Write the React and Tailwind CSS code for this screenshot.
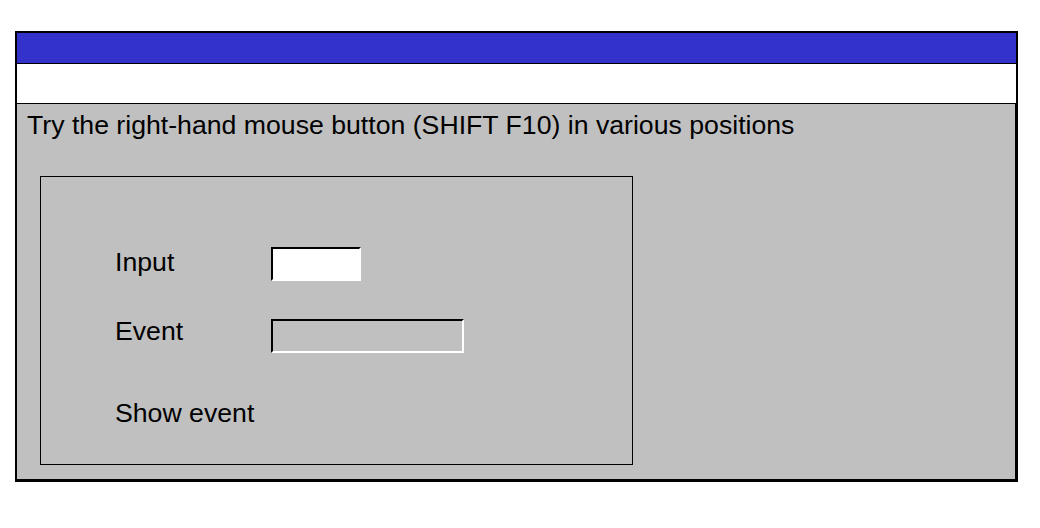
export default function App() {
  return (
    <div className="min-h-screen bg-white pl-[15px] pt-[31px] font-['Liberation_Sans',Arial,sans-serif] text-black">
      <div className="flex w-[1003px] flex-col border-2 border-black">
        <div className="h-[31px] border-b border-black bg-[#3333cc]" />
        <div className="h-[40px] border-b border-black bg-white" />
        <div className="h-[376px] border-r border-b border-black bg-[#c0c0c0] pl-[10px] pt-[6px]">
          <p className="text-[26.67px] leading-[30px]">
            Try the right-hand mouse button (SHIFT F10) in various positions
          </p>

          <div className="ml-[13px] mt-[36px] h-[289px] w-[593px] border border-black pl-[74px] pt-[70px] text-[26.67px] leading-[30px]">
            <div className="flex items-start">
              <span className="w-[156px]">Input</span>
              <input
                type="text"
                className="h-[34px] w-[90px] border-2 border-t-black border-l-black border-r-white border-b-white bg-white outline-none"
              />
            </div>
            <div className="mt-[38px] flex items-start">
              <span className="-mt-[3px] w-[156px]">Event</span>
              <div className="h-[34px] w-[193px] border-2 border-t-black border-l-black border-r-white border-b-white bg-[#c0c0c0]" />
            </div>
            <div className="mt-[45px]">Show event</div>
          </div>
        </div>
      </div>
    </div>
  )
}
